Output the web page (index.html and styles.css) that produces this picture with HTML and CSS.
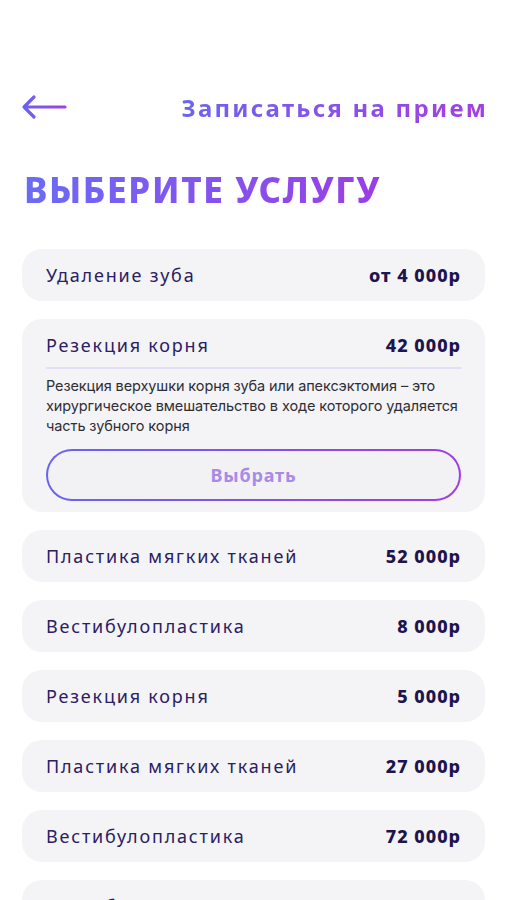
FILE: index.html
```html
<!DOCTYPE html>
<html lang="ru">
<head>
  <meta charset="UTF-8">
  <meta name="viewport" content="width=device-width, initial-scale=1.0">
  <title>Записаться на прием</title>
  <link rel="stylesheet" href="styles.css">
</head>
<body>
  <div class="container">
    <header class="top-bar">
      <a href="#" class="back" aria-label="Назад">
        <svg width="46" height="26" viewBox="0 0 46 26">
          <defs>
            <linearGradient id="arrowGrad" x1="0" y1="0" x2="1" y2="0">
              <stop offset="0" stop-color="#6a63f2"/>
              <stop offset="1" stop-color="#a23fe0"/>
            </linearGradient>
          </defs>
          <path d="M3 13 H44 M13 3 L3 13 L13 23" fill="none" stroke="url(#arrowGrad)" stroke-width="3.2" stroke-linecap="round" stroke-linejoin="round"/>
        </svg>
      </a>
      <span class="top-title">Записаться на прием</span>
    </header>

    <h1 class="heading">ВЫБЕРИТЕ УСЛУГУ</h1>

    <ul class="services">
      <li class="service">
        <div class="service-row">
          <span class="service-name">Удаление зуба</span>
          <span class="service-price">от 4 000р</span>
        </div>
      </li>
      <li class="service open">
        <div class="service-row">
          <span class="service-name">Резекция корня</span>
          <span class="service-price">42 000р</span>
        </div>
        <p class="service-desc">Резекция верхушки корня зуба или апексэктомия – это хирургическое вмешательство в ходе которого удаляется часть зубного корня</p>
        <button class="choose">Выбрать</button>
      </li>
      <li class="service">
        <div class="service-row">
          <span class="service-name">Пластика мягких тканей</span>
          <span class="service-price">52 000р</span>
        </div>
      </li>
      <li class="service">
        <div class="service-row">
          <span class="service-name">Вестибулопластика</span>
          <span class="service-price">8 000р</span>
        </div>
      </li>
      <li class="service">
        <div class="service-row">
          <span class="service-name">Резекция корня</span>
          <span class="service-price">5 000р</span>
        </div>
      </li>
      <li class="service">
        <div class="service-row">
          <span class="service-name">Пластика мягких тканей</span>
          <span class="service-price">27 000р</span>
        </div>
      </li>
      <li class="service">
        <div class="service-row">
          <span class="service-name">Вестибулопластика</span>
          <span class="service-price">72 000р</span>
        </div>
      </li>
      <li class="service">
        <div class="service-row">
          <span class="service-name">Вестибулопластика</span>
          <span class="service-price">7 000р</span>
        </div>
      </li>
    </ul>
  </div>
</body>
</html>
```

FILE: styles.css
```css
body {
  margin: 0;
  padding: 0;
  background: #fff;
  font-family: "Noto Sans", "DejaVu Sans", sans-serif;
  color: #261c5c;
}

.container {
  padding: 92px 22px 0 22px;
}

.top-bar {
  display: flex;
  justify-content: space-between;
  align-items: center;
  height: 30px;
}

.back {
  display: flex;
  margin-left: -1px;
}

.top-title,
.heading {
  background: linear-gradient(90deg, #6b64f2 0%, #a43fe0 100%);
  -webkit-background-clip: text;
  background-clip: text;
  color: transparent;
}

.top-title {
  font-family: "Noto Sans", sans-serif;
  font-size: 24px;
  font-weight: 700;
  letter-spacing: 2.25px;
  margin-right: -3px;
}

.heading {
  display: inline-block;
  margin: 46px 0 0 2px;
  font-family: "Noto Sans", sans-serif;
  font-size: 35px;
  font-weight: 800;
  letter-spacing: 1.6px;
  line-height: 44px;
  background: linear-gradient(90deg, #6a6cf5 0%, #9b3de6 100%);
  -webkit-background-clip: text;
  background-clip: text;
}

.services {
  list-style: none;
  margin: 37px 0 0 0;
  padding: 0;
  display: flex;
  flex-direction: column;
  gap: 18px;
}

.service {
  background: #f4f4f6;
  border-radius: 20px;
  padding: 0 24px;
}

.service-row {
  display: flex;
  justify-content: space-between;
  align-items: center;
  height: 52px;
}

.service-name {
  font-size: 18px;
  letter-spacing: 1.8px;
  color: #2a2062;
}

.service-price {
  font-size: 18px;
  font-weight: 800;
  letter-spacing: 1px;
  color: #1d1450;
}

.service.open {
  padding-bottom: 11px;
}

.service.open .service-row {
  height: 50px;
  align-items: flex-end;
  border-bottom: 2px solid #e2def6;
  padding-bottom: 10px;
  box-sizing: border-box;
}

.service-desc {
  margin: 7px 0 13px 0;
  font-family: Inter, "Noto Sans", sans-serif;
  font-size: 14.5px;
  line-height: 20px;
  letter-spacing: -0.1px;
  color: #2e2e36;
}

.choose {
  display: block;
  width: 100%;
  height: 52px;
  border: 2.5px solid transparent;
  border-radius: 26px;
  background:
    linear-gradient(#f2f2f5, #f2f2f5) padding-box,
    linear-gradient(90deg, #6a63f2, #a03de2) border-box;
  font-family: "Noto Sans", sans-serif;
  font-size: 18px;
  font-weight: 700;
  letter-spacing: 0.8px;
  color: #a88ae8;
  cursor: pointer;
}
```
